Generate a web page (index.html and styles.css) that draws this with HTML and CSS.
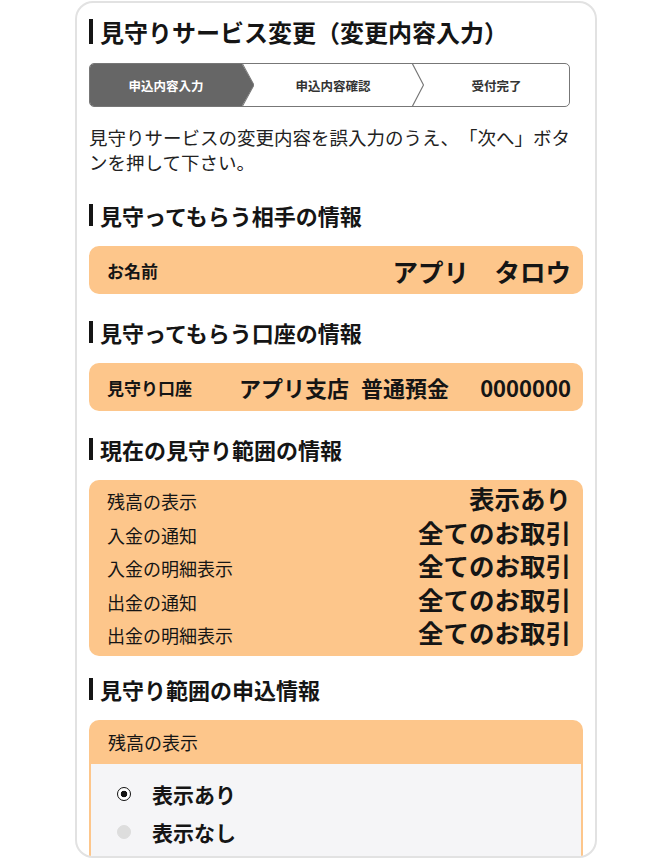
FILE: index.html
```html
<!DOCTYPE html>
<html lang="ja">
<head>
<meta charset="utf-8">
<title>見守りサービス変更（変更内容入力）</title>
<link rel="stylesheet" href="styles.css">
</head>
<body>
<div class="card">
  <h1 class="page-title">見守りサービス変更（変更内容入力）</h1>

  <ol class="stepper">
    <li class="step step-1">申込内容入力</li>
    <li class="sep"><svg viewBox="0 0 12 41" preserveAspectRatio="none"><polygon points="0,0 12,20.5 0,41" fill="#666"/><polyline points="0,-1 12,20.5 0,42" fill="none" stroke="#777" stroke-width="1"/></svg></li>
    <li class="step step-2">申込内容確認</li>
    <li class="sep"><svg viewBox="0 0 12 41" preserveAspectRatio="none"><polyline points="0,-1 11.5,20.5 0,42" fill="none" stroke="#777" stroke-width="1.2"/></svg></li>
    <li class="step step-3">受付完了</li>
  </ol>

  <p class="lead">見守りサービスの変更内容を誤入力のうえ、「次へ」ボタンを押して下さい。</p>

  <section class="section section-first">
    <h2 class="sec-title">見守ってもらう相手の情報</h2>
    <div class="info-box info-row">
      <span class="info-label">お名前</span>
      <span class="name">アプリ　タロウ</span>
    </div>
  </section>

  <section class="section">
    <h2 class="sec-title">見守ってもらう口座の情報</h2>
    <div class="info-box info-row">
      <span class="info-label">見守り口座</span>
      <span class="acct">
        <span class="acct-branch">アプリ支店</span>
        <span class="acct-type">普通預金</span>
        <span class="acct-no">0000000</span>
      </span>
    </div>
  </section>

  <section class="section">
    <h2 class="sec-title">現在の見守り範囲の情報</h2>
    <div class="info-box range-box">
      <div class="range-row"><span class="range-label">残高の表示</span><span class="range-value">表示あり</span></div>
      <div class="range-row"><span class="range-label">入金の通知</span><span class="range-value">全てのお取引</span></div>
      <div class="range-row"><span class="range-label">入金の明細表示</span><span class="range-value">全てのお取引</span></div>
      <div class="range-row"><span class="range-label">出金の通知</span><span class="range-value">全てのお取引</span></div>
      <div class="range-row"><span class="range-label">出金の明細表示</span><span class="range-value">全てのお取引</span></div>
    </div>
  </section>

  <section class="section section-tight">
    <h2 class="sec-title">見守り範囲の申込情報</h2>
    <div class="apply-box">
      <div class="apply-head">残高の表示</div>
      <div class="apply-body">
        <label class="radio-row"><input class="radio" type="radio" name="balance" checked><span>表示あり</span></label>
        <label class="radio-row"><input class="radio" type="radio" name="balance"><span>表示なし</span></label>
      </div>
    </div>
  </section>
</div>
</body>
</html>
```

FILE: styles.css
```css
html, body {
  margin: 0;
  padding: 0;
  background: #ffffff;
}

body {
  font-family: "Noto Sans CJK JP", "Noto Sans", sans-serif;
  color: #151515;
  text-spacing-trim: space-all;
}

.card {
  box-sizing: border-box;
  width: 522px;
  height: 857px;
  margin: 1px 0 0 75px;
  padding: 0 12px;
  border: 2px solid #e2e2e2;
  border-radius: 18px;
  overflow: hidden;
  background: #fff;
}

.page-title {
  margin: 16px 0 0;
  font-size: 24px;
  line-height: 25px;
  font-weight: 700;
  border-left: 4px solid #151515;
  padding-left: 7px;
}

/* stepper */
.stepper {
  list-style: none;
  margin: 19px 0 0;
  padding: 0;
  display: flex;
  box-sizing: border-box;
  width: 481px;
  height: 44px;
  border: 1.5px solid #777;
  border-radius: 5px;
  overflow: hidden;
}

.step {
  display: flex;
  align-items: center;
  justify-content: center;
  font-size: 12.5px;
  font-weight: 700;
  color: #333;
}

.step-1 {
  flex: 0 0 152px;
  background: #666;
  color: #fff;
}

.step-2 {
  flex: 0 0 158px;
}

.step-3 {
  flex: 1 1 auto;
}

.sep {
  flex: 0 0 12px;
  display: block;
}

.sep svg {
  display: block;
  width: 12px;
  height: 100%;
}

.lead {
  margin: 18px 0 0;
  font-size: 18.5px;
  line-height: 25px;
  color: #222;
}

/* sections */
.section {
  margin-top: 27px;
}

.section-first {
  margin-top: 29px;
}

.section-tight {
  margin-top: 22px;
}

.sec-title {
  margin: 0;
  font-size: 22px;
  line-height: 22px;
  font-weight: 700;
  border-left: 4px solid #151515;
  padding-left: 7px;
}

.info-box {
  margin-top: 20px;
  background: #fdc68b;
  border-radius: 10px;
}

.info-row {
  box-sizing: border-box;
  height: 48px;
  display: flex;
  align-items: center;
  justify-content: space-between;
  padding: 0 12px 0 18px;
}

.info-label {
  font-size: 17px;
  font-weight: 700;
}

.name {
  font-size: 25.5px;
  font-weight: 700;
}

.acct {
  display: flex;
  align-items: center;
  font-size: 22px;
  font-weight: 700;
}

.acct-type {
  margin-left: 12px;
}

.acct-no {
  margin-left: 31px;
}

/* current range */
.range-box {
  padding: 4px 12px 4px 18px;
}

.range-row {
  display: flex;
  justify-content: space-between;
  align-items: baseline;
  height: 33.5px;
}

.range-label {
  font-size: 18px;
  line-height: 33.5px;
}

.range-value {
  font-size: 25.5px;
  line-height: 27px;
  font-weight: 700;
}

/* apply box */
.apply-box {
  margin-top: 20px;
  border-radius: 10px 10px 0 0;
  overflow: hidden;
}

.apply-head {
  height: 44px;
  line-height: 44px;
  padding-left: 19px;
  background: #fdc68b;
  font-size: 18px;
}

.apply-body {
  background: #f5f5f7;
  border: 2px solid #fdc68b;
  border-top: none;
  padding: 11px 0 40px 26px;
}

.radio-row {
  display: flex;
  align-items: center;
  gap: 21px;
  height: 38px;
  font-size: 21px;
  font-weight: 700;
}

.radio {
  -webkit-appearance: none;
  appearance: none;
  margin: 0;
  box-sizing: border-box;
  width: 14px;
  height: 14px;
  border-radius: 50%;
  border: 1.5px solid #ddd;
  background: #ddd;
  flex: 0 0 auto;
}

.radio:checked {
  border-color: #111;
  background: radial-gradient(circle, #111 0 3px, #fff 3.6px);
}
```
